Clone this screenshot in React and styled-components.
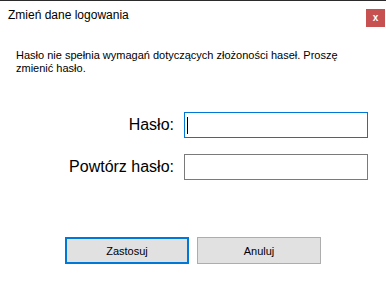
import React from 'react';
import styled, { createGlobalStyle } from 'styled-components';

const GlobalStyle = createGlobalStyle`
  html, body {
    margin: 0;
    padding: 0;
    background: #ffffff;
  }
  body {
    font-family: "Liberation Sans", Arial, sans-serif;
  }
`;

const Window = styled.div`
  width: 386px;
  height: 290px;
  box-sizing: border-box;
  border-top: 1px solid #2b2b2b;
  background: #ffffff;
  display: flex;
  flex-direction: column;
`;

const TitleBar = styled.div`
  height: 29px;
  display: flex;
  justify-content: space-between;
  align-items: flex-start;
  padding: 7px 1px 0 8px;
  box-sizing: border-box;
`;

const Title = styled.div`
  font-size: 12px;
  line-height: 14px;
  color: #000000;
`;

const CloseButton = styled.div`
  width: 19px;
  height: 18px;
  margin-top: 1px;
  background: #c75050;
  color: #ffffff;
  font-size: 10px;
  font-weight: bold;
  line-height: 17px;
  text-align: center;
`;

const Message = styled.p`
  margin: 19px 0 0 0;
  padding: 0 16px;
  font-size: 11px;
  line-height: 13px;
  color: #000000;
`;

const Form = styled.div`
  margin-top: 37px;
  display: grid;
  grid-template-columns: 174px 184px;
  column-gap: 10px;
  row-gap: 16px;
  align-items: center;
`;

const Label = styled.label`
  text-align: right;
  font-size: 16px;
  line-height: 26px;
  color: #000000;
`;

const Field = styled.div`
  position: relative;
  width: 184px;
  height: 26px;
`;

const Input = styled.input`
  width: 100%;
  height: 100%;
  box-sizing: border-box;
  margin: 0;
  padding: 0 4px;
  border: 1px solid ${p => (p.$active ? '#0078d7' : '#7a7a7a')};
  outline: none;
  background: #ffffff;
  font-family: "Liberation Sans", Arial, sans-serif;
  font-size: 14px;
`;

const Caret = styled.span`
  position: absolute;
  left: 3px;
  top: 5px;
  width: 1px;
  height: 17px;
  background: #000000;
`;

const Buttons = styled.div`
  margin-top: 57px;
  padding-left: 65px;
  display: flex;
  gap: 8px;
`;

const Button = styled.button`
  width: 124px;
  height: 27px;
  box-sizing: border-box;
  margin: 0;
  padding: 0;
  background: #e1e1e1;
  border: ${p => (p.$primary ? '2px solid #0078d7' : '1px solid #adadad')};
  font-family: "Liberation Sans", Arial, sans-serif;
  font-size: 11px;
  color: #000000;
`;

const App = () => (
  <>
    <GlobalStyle />
    <Window>
      <TitleBar>
        <Title>Zmień dane logowania</Title>
        <CloseButton>x</CloseButton>
      </TitleBar>
      <Message>
        Hasło nie spełnia wymagań dotyczących złożoności haseł. Proszę zmienić hasło.
      </Message>
      <Form>
        <Label>Hasło:</Label>
        <Field>
          <Input type="password" $active />
          <Caret />
        </Field>
        <Label>Powtórz hasło:</Label>
        <Field>
          <Input type="password" />
        </Field>
      </Form>
      <Buttons>
        <Button $primary>Zastosuj</Button>
        <Button>Anuluj</Button>
      </Buttons>
    </Window>
  </>
);

export default App;
